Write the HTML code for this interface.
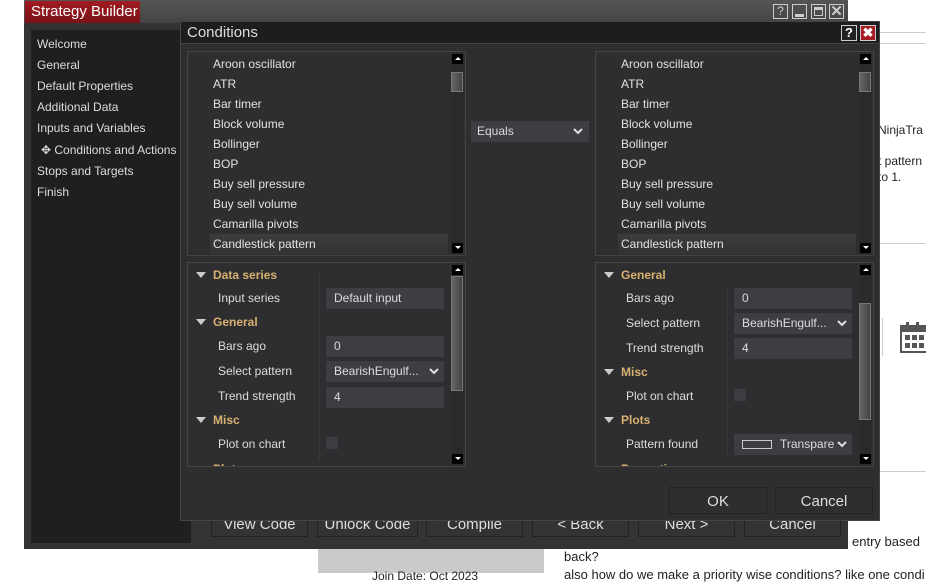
<!DOCTYPE html>
<html><head><style>
*{margin:0;padding:0;box-sizing:border-box}
body{width:926px;height:573px;background:#fff;position:relative;overflow:hidden;font-family:"Liberation Sans",sans-serif;font-size:12px;color:#ddd}
.a{position:absolute}
.wt{color:#222;font-size:12px}
.list div{height:20px;line-height:20px;padding-left:25px;color:#e2e2e2}
.sb{position:absolute;right:2px;width:12px;background:#2a2a2a}
.arr{position:absolute;left:1px;width:11px;height:10px;background:#000}
.arr:after{content:"";position:absolute;left:3px;top:3px;border-left:3px solid transparent;border-right:3px solid transparent}
.up:after{border-bottom:3px solid #fff}
.dn:after{border-top:3px solid #fff}
.gh{position:absolute;left:0;color:#d8b070;font-weight:bold;padding-left:25px;height:24px;line-height:24px}
.gh:before{content:"";position:absolute;left:8px;top:9px;border-left:5px solid transparent;border-right:5px solid transparent;border-top:6px solid #ccc}
.pr{position:absolute;left:30px;color:#ddd;height:24px;line-height:24px}
.val{position:absolute;background:#3d3d42;color:#ddd;height:21px;line-height:21px;padding-left:8px}
.btn{position:absolute;border:1px solid #222;color:#ddd;font-size:15px;text-align:center}
.thumb{position:absolute;left:0;width:12px;background:linear-gradient(90deg,#666,#444);border:1px solid #777}
</style></head><body>
<div class="a" style="left:880px;top:32px;width:46px;height:1px;background:#ccc"></div>
<div class="a" style="left:880px;top:43px;width:46px;height:1px;background:#ccc"></div>
<div class="a wt" style="left:878px;top:123px">NinjaTra</div>
<div class="a wt" style="left:878px;top:154px">t pattern</div>
<div class="a wt" style="left:878px;top:170px">to 1.</div>
<div class="a" style="left:880px;top:243px;width:46px;height:1px;background:#ccc"></div>
<div class="a" style="left:882px;top:318px;width:1px;height:38px;background:#ccc"></div>
<svg class="a" style="left:900px;top:321px" width="26" height="34" viewBox="0 0 26 34"><rect x="1" y="5" width="30" height="26" fill="none" stroke="#555" stroke-width="2"/><rect x="1" y="5" width="30" height="6" fill="#555"/><rect x="6" y="1" width="3" height="8" fill="#555"/><rect x="16" y="1" width="3" height="8" fill="#555"/><g fill="#555"><rect x="5" y="14" width="5" height="5"/><rect x="12" y="14" width="5" height="5"/><rect x="19" y="14" width="5" height="5"/><rect x="5" y="22" width="5" height="5"/><rect x="12" y="22" width="5" height="5"/><rect x="19" y="22" width="5" height="5"/></g></svg>
<div class="a" style="left:880px;top:471px;width:46px;height:1px;background:#ccc"></div>
<div class="a wt" style="left:852px;top:534px;font-size:13px">entry based</div>
<div class="a wt" style="left:564px;top:549px;font-size:13px">back?</div>
<div class="a wt" style="left:564px;top:567px;font-size:13px">also how do we make a priority wise conditions? like one condi</div>
<div class="a" style="left:318px;top:549px;width:226px;height:24px;background:#c8cacc"></div>
<div class="a wt" style="left:372px;top:569px">Join Date: Oct 2023</div>

<div class="a" style="left:24px;top:0;width:824px;height:549px;background:#333"></div>
<div class="a" style="left:24px;top:0;width:824px;height:23px;background:linear-gradient(#555,#444)"></div>
<div class="a" style="left:25px;top:1px;width:115px;height:22px;background:linear-gradient(#a01c22,#7a1116);color:#fff;font-size:15px;line-height:22px;padding-left:6px">Strategy Builder</div>
<div class="a" style="left:773px;top:4px;width:15px;height:15px;border:1px solid #ccc;color:#ccc;font-size:12px;text-align:center;line-height:13px">?</div>
<div class="a" style="left:792px;top:4px;width:15px;height:15px;border:1px solid #ccc"><div class="a" style="left:2px;top:9px;width:9px;height:3px;background:#ccc"></div></div>
<div class="a" style="left:811px;top:4px;width:15px;height:15px;border:1px solid #ccc"><div class="a" style="left:2px;top:2px;width:9px;height:9px;border:1px solid #ccc;border-top-width:3px"></div></div>
<div class="a" style="left:829px;top:4px;width:15px;height:15px;border:1px solid #ccc;color:#ccc;font-size:15px;font-weight:bold;text-align:center;line-height:13px">✕</div>
<div class="a" style="left:31px;top:30px;width:160px;height:513px;background:#1f1f1f;font-size:12px;line-height:21px;padding:4px 0 0 6px;color:#ddd">
<div>Welcome</div><div>General</div><div>Default Properties</div><div>Additional Data</div><div>Inputs and Variables</div><div style="padding-left:4px;margin-top:1px">✥ Conditions and Actions</div><div>Stops and Targets</div><div>Finish</div></div>
<div class="btn" style="left:211px;top:511px;width:97px;height:26px;line-height:26px">View Code</div>
<div class="btn" style="left:317px;top:511px;width:101px;height:26px;line-height:26px">Unlock Code</div>
<div class="btn" style="left:426px;top:511px;width:97px;height:26px;line-height:26px">Compile</div>
<div class="btn" style="left:532px;top:511px;width:97px;height:26px;line-height:26px">&lt; Back</div>
<div class="btn" style="left:638px;top:511px;width:97px;height:26px;line-height:26px">Next &gt;</div>
<div class="btn" style="left:744px;top:511px;width:97px;height:26px;line-height:26px">Cancel</div>

<div class="a" style="left:180px;top:21px;width:700px;height:500px;background:#2e2e30;border:1px solid #444"></div>
<div class="a" style="left:181px;top:22px;width:698px;height:22px;background:#1d1d1d;border-bottom:1px solid #444;color:#ddd;font-size:15px;line-height:22px;padding-left:6px">Conditions</div>
<div class="a" style="left:841px;top:25px;width:16px;height:16px;border:1px solid #ccc;background:#222;color:#fff;font-size:13px;font-weight:bold;text-align:center;line-height:14px">?</div>
<div class="a" style="left:860px;top:25px;width:16px;height:16px;border:1px solid #ccc;background:#a51c22;color:#fff;font-size:13px;font-weight:bold;text-align:center;line-height:14px">✖</div>

<div class="a" style="left:187px;top:51px;width:279px;height:205px;border:1px solid #444;background:#2e2e30">
 <div class="list" style="padding-top:2px">
 <div>Aroon oscillator</div><div>ATR</div><div>Bar timer</div><div>Block volume</div><div>Bollinger</div><div>BOP</div><div>Buy sell pressure</div><div>Buy sell volume</div><div>Camarilla pivots</div><div style="background:linear-gradient(#3c3c3e,#333335);margin-left:22px;padding-left:3px;width:238px">Candlestick pattern</div></div>
 <div class="sb" style="top:0;height:203px"><div class="arr up" style="top:2px"></div><div class="thumb" style="top:20px;height:20px"></div><div class="arr dn" style="top:191px"></div></div>
</div>
<div class="a" style="left:471px;top:121px;width:118px;height:21px;background:#3d3d42;color:#ddd;line-height:21px;padding-left:6px">Equals<svg class="a" style="right:6px;top:7px" width="10" height="7" viewBox="0 0 10 7"><path d="M1 1l4 4 4-4" fill="none" stroke="#ddd" stroke-width="2"/></svg></div>
<div class="a" style="left:595px;top:51px;width:279px;height:205px;border:1px solid #444;background:#2e2e30">
 <div class="list" style="padding-top:2px">
 <div>Aroon oscillator</div><div>ATR</div><div>Bar timer</div><div>Block volume</div><div>Bollinger</div><div>BOP</div><div>Buy sell pressure</div><div>Buy sell volume</div><div>Camarilla pivots</div><div style="background:linear-gradient(#3c3c3e,#333335);margin-left:22px;padding-left:3px;width:238px">Candlestick pattern</div></div>
 <div class="sb" style="top:0;height:203px"><div class="arr up" style="top:2px"></div><div class="thumb" style="top:20px;height:20px"></div><div class="arr dn" style="top:191px"></div></div>
</div>

<div class="a" style="left:187px;top:262px;width:279px;height:205px;border:1px solid #444;background:#2e2e30;overflow:hidden">
 <div class="gh" style="top:0">Data series</div>
 <div class="pr" style="top:23px">Input series</div><div class="val" style="left:138px;top:25px;width:118px">Default input</div>
 <div class="gh" style="top:47px">General</div>
 <div class="pr" style="top:71px">Bars ago</div><div class="val" style="left:138px;top:73px;width:118px">0</div>
 <div class="pr" style="top:96px">Select pattern</div><div class="val" style="left:138px;top:98px;width:118px">BearishEngulf...<svg class="a" style="right:5px;top:7px" width="10" height="7" viewBox="0 0 10 7"><path d="M1 1l4 4 4-4" fill="none" stroke="#ddd" stroke-width="2"/></svg></div>
 <div class="pr" style="top:121px">Trend strength</div><div class="val" style="left:138px;top:124px;width:118px">4</div>
 <div class="gh" style="top:145px">Misc</div>
 <div class="pr" style="top:169px">Plot on chart</div><div class="a" style="left:138px;top:174px;width:12px;height:12px;background:#3d3d42"></div>
 <div class="gh" style="top:194px">Plots</div>
 <div class="a" style="left:131px;top:11px;width:1px;height:185px;background:#3a3a3a"></div>
 <div class="sb" style="top:0;height:203px"><div class="arr up" style="top:2px"></div><div class="thumb" style="top:13px;height:115px"></div><div class="arr dn" style="top:191px"></div></div>
</div>
<div class="a" style="left:595px;top:262px;width:279px;height:205px;border:1px solid #444;background:#2e2e30;overflow:hidden">
 <div class="gh" style="top:0">General</div>
 <div class="pr" style="top:23px">Bars ago</div><div class="val" style="left:138px;top:25px;width:118px">0</div>
 <div class="pr" style="top:48px">Select pattern</div><div class="val" style="left:138px;top:50px;width:118px">BearishEngulf...<svg class="a" style="right:5px;top:7px" width="10" height="7" viewBox="0 0 10 7"><path d="M1 1l4 4 4-4" fill="none" stroke="#ddd" stroke-width="2"/></svg></div>
 <div class="pr" style="top:73px">Trend strength</div><div class="val" style="left:138px;top:75px;width:118px">4</div>
 <div class="gh" style="top:97px">Misc</div>
 <div class="pr" style="top:121px">Plot on chart</div><div class="a" style="left:138px;top:126px;width:12px;height:12px;background:#3d3d42"></div>
 <div class="gh" style="top:145px">Plots</div>
 <div class="pr" style="top:169px">Pattern found</div><div class="val" style="left:138px;top:171px;width:118px"><span style="display:inline-block;width:30px;height:9px;border:1px solid #ccc;vertical-align:middle;margin-right:8px"></span>Transpare<svg class="a" style="right:5px;top:7px" width="10" height="7" viewBox="0 0 10 7"><path d="M1 1l4 4 4-4" fill="none" stroke="#ddd" stroke-width="2"/></svg></div>
 <div class="gh" style="top:194px">Properties</div>
 <div class="a" style="left:131px;top:24px;width:1px;height:170px;background:#3a3a3a"></div>
 <div class="sb" style="top:0;height:203px"><div class="arr up" style="top:2px"></div><div class="thumb" style="top:40px;height:117px"></div><div class="arr dn" style="top:191px"></div></div>
</div>
<div class="btn" style="left:669px;top:487px;width:98px;height:27px;line-height:27px;background:#2e2e30">OK</div>
<div class="btn" style="left:775px;top:487px;width:98px;height:27px;line-height:27px;background:#2e2e30">Cancel</div>
</body></html>
